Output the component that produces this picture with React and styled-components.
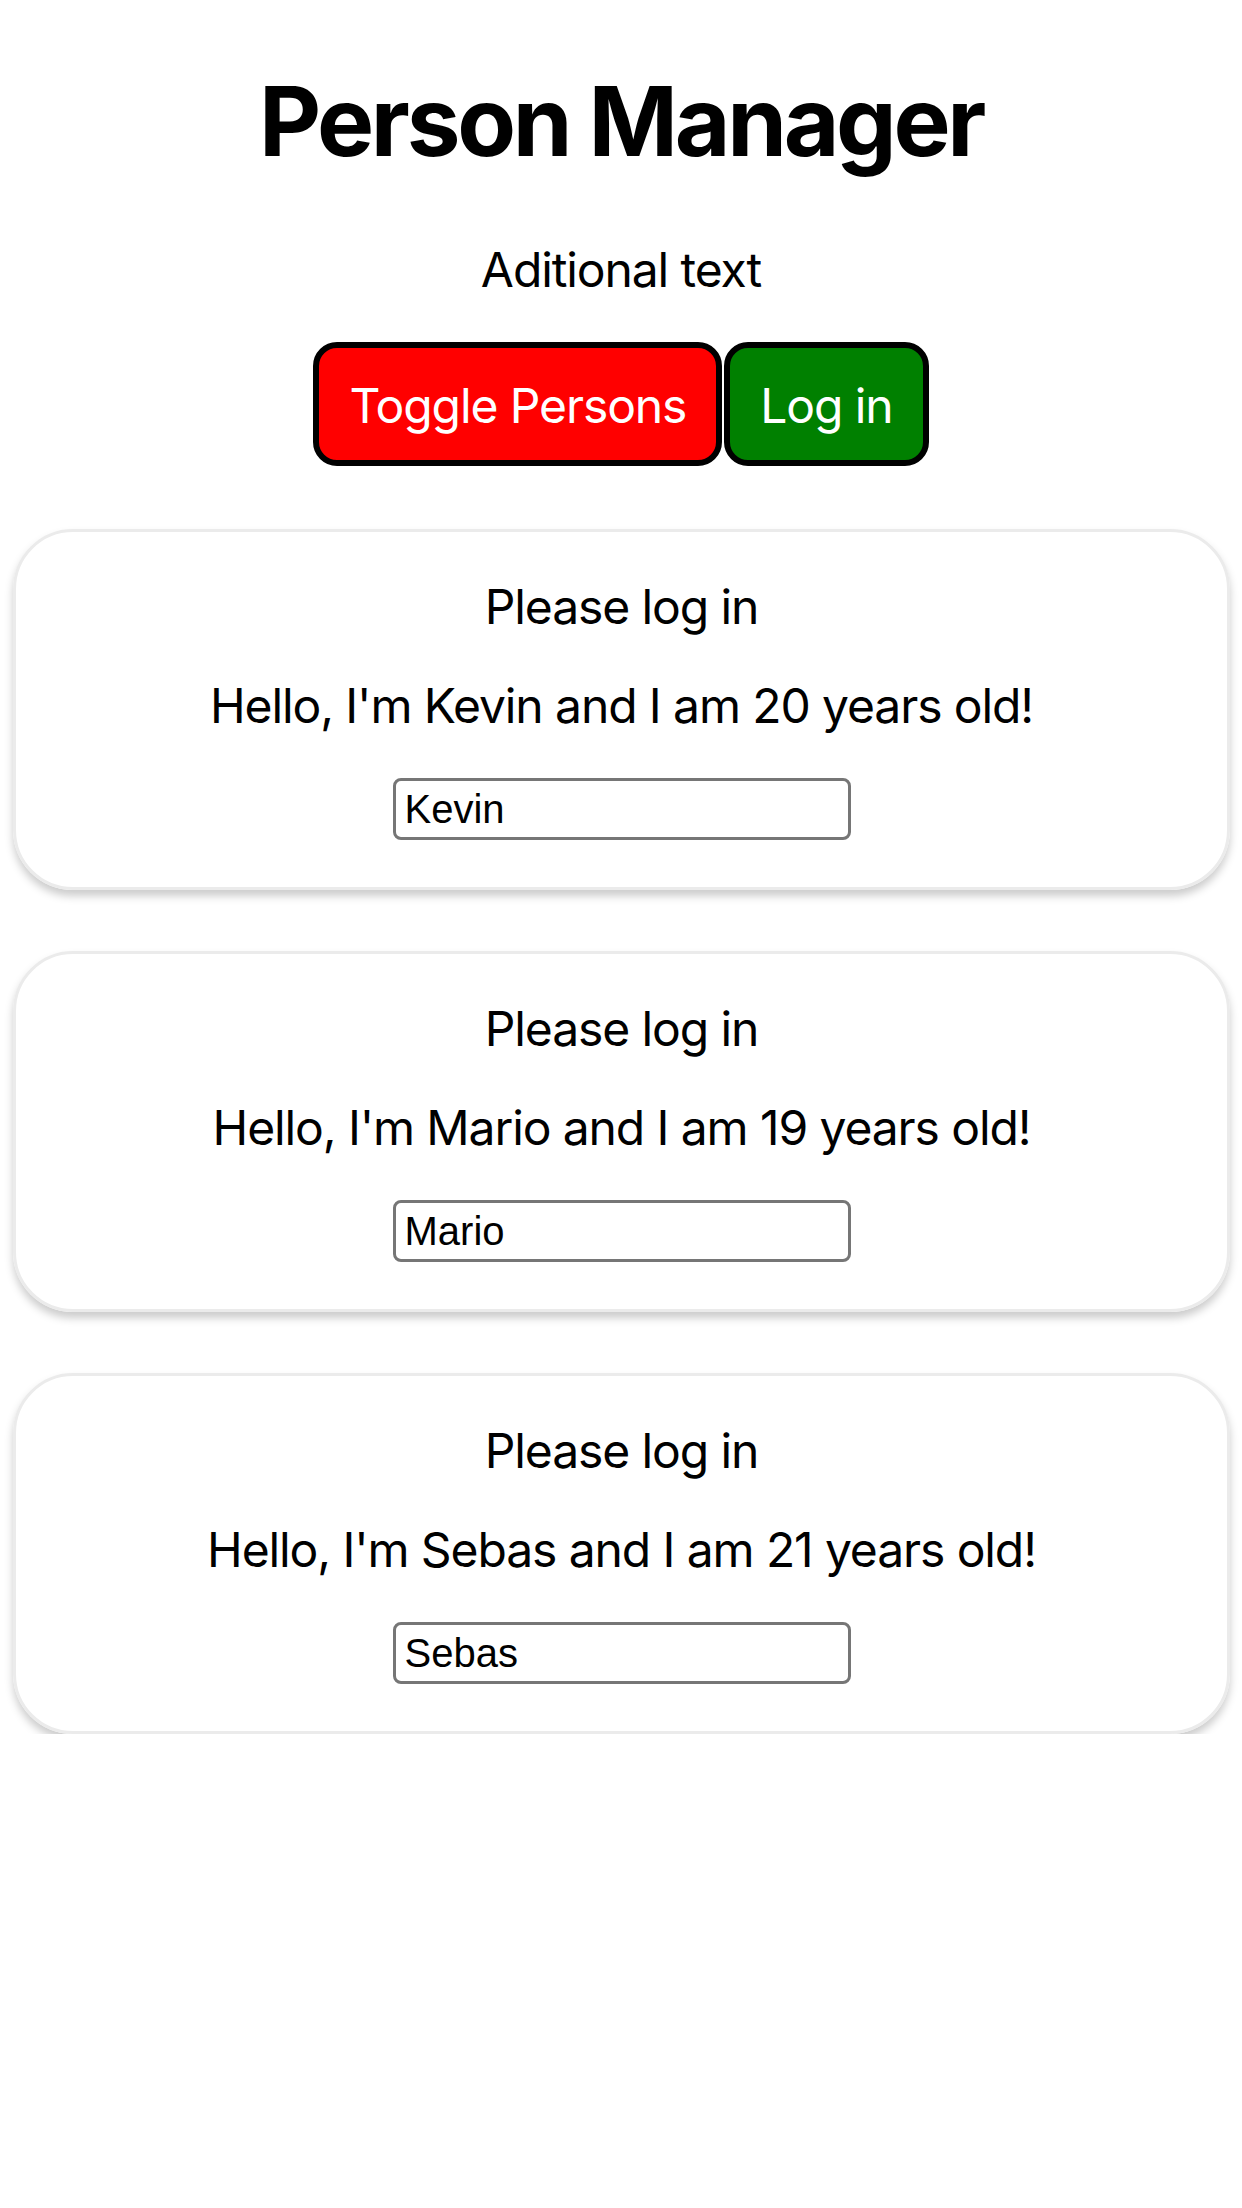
import React, { useState } from "react";
import styled, { createGlobalStyle } from "styled-components";

const GlobalStyle = createGlobalStyle`
  body {
    margin: 0;
    background: #fff;
    font-family: Inter, "Noto Sans", sans-serif;
    color: #000;
  }
`;

const Page = styled.div`
  text-align: center;
  padding-top: 63px;
`;

const Title = styled.h1`
  margin: 0;
  font-size: 96px;
  font-weight: 700;
  line-height: 116px;
  letter-spacing: -3.3px;
`;

const Subtitle = styled.p`
  margin: 62px 0 0;
  font-size: 48px;
  line-height: 57px;
  letter-spacing: -1.1px;
`;

const ButtonRow = styled.div`
  display: flex;
  justify-content: center;
  gap: 2px;
  margin-top: 44px;
`;

const Button = styled.button`
  height: 124px;
  padding: 29px 30px 26px;
  border: 6px solid #000;
  border-radius: 24px;
  background-color: ${(p) => p.$bg};
  color: #fff;
  font-family: Inter, "Noto Sans", sans-serif;
  font-size: 48px;
  line-height: 57px;
  letter-spacing: -1.1px;
  cursor: pointer;
`;

const CardList = styled.div`
  display: flex;
  flex-direction: column;
  gap: 61px;
  margin-top: 63px;
  padding: 0 12px 0 13px;
`;

const Card = styled.div`
  border: 3px solid #ebebeb;
  border-radius: 60px;
  box-shadow: 0 6px 9px #ccc;
  padding: 46px 0 47px;
`;

const Line = styled.p`
  margin: 0 0 ${(p) => p.$gap}px;
  font-size: 48px;
  line-height: 57px;
  letter-spacing: -1.1px;
`;

const NameInput = styled.input`
  display: block;
  box-sizing: border-box;
  width: 458px;
  height: 62px;
  margin: 0 auto;
  padding: 0 9px;
  border: 3px solid #767676;
  border-radius: 8px;
  font-family: "Liberation Sans", Arial, sans-serif;
  font-size: 40px;
  color: #000;
  background: #fff;
  outline: none;
`;

const initialPersons = [
  { id: 1, name: "Kevin", age: 20 },
  { id: 2, name: "Mario", age: 19 },
  { id: 3, name: "Sebas", age: 21 },
];

export default function App() {
  const [persons, setPersons] = useState(initialPersons);
  const [showPersons, setShowPersons] = useState(true);

  const changeName = (id, value) => {
    setPersons(persons.map((p) => (p.id === id ? { ...p, name: value } : p)));
  };

  return (
    <Page>
      <GlobalStyle />
      <Title>Person Manager</Title>
      <Subtitle>Aditional text</Subtitle>

      <ButtonRow>
        <Button $bg="#ff0000" onClick={() => setShowPersons(!showPersons)}>
          Toggle Persons
        </Button>
        <Button $bg="#008000">Log in</Button>
      </ButtonRow>

      {showPersons && (
        <CardList>
          {persons.map((p) => (
            <Card key={p.id}>
              <Line $gap={42}>Please log in</Line>
              <Line $gap={44}>
                Hello, I'm {p.name} and I am {p.age} years old!
              </Line>
              <NameInput
                value={p.name}
                onChange={(e) => changeName(p.id, e.target.value)}
              />
            </Card>
          ))}
        </CardList>
      )}
    </Page>
  );
}
